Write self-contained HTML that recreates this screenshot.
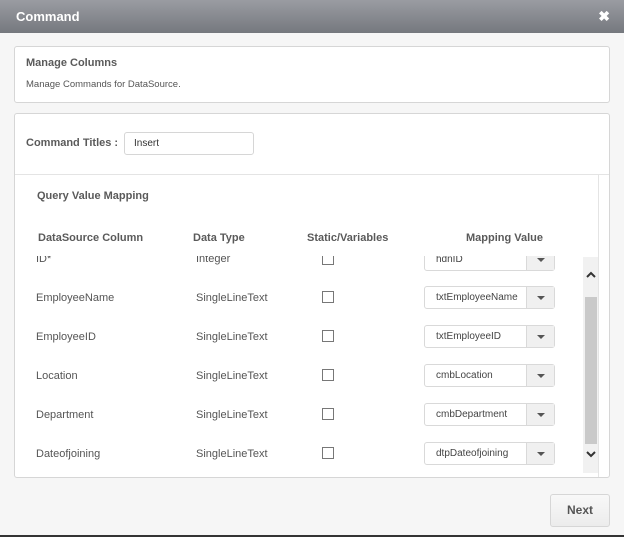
<!DOCTYPE html>
<html><head><meta charset="utf-8"><style>
*{box-sizing:border-box;margin:0;padding:0}
body{width:624px;height:537px;overflow:hidden;background:#f6f6f6;font-family:"Liberation Sans",Arial,sans-serif;position:relative;color:#555}
.hdr{position:absolute;left:0;top:0;width:624px;height:33px;background:linear-gradient(#9a9ca2,#75787e);color:#fff;font-weight:bold;font-size:13px;line-height:33px;padding-left:16px}
.x{position:absolute;right:14px;top:0;font-size:14px}
.card{position:absolute;left:14px;width:596px;background:#fff;border:1px solid #d6d6d6;border-radius:3px}
.a{position:absolute;font-size:11px;white-space:nowrap}
.b{font-weight:bold;color:#5a5a5a}
.sel{position:absolute;left:424px;width:131px;height:23px;border:1px solid #d9d9d9;border-radius:3px;background:#fff;font-size:10px;line-height:21px;padding-left:11px;color:#444}
.sel i{position:absolute;right:0;top:0;width:28px;height:21px;background:#f0f0f0;border-left:1px solid #d9d9d9}
.sel i:after{content:"";position:absolute;left:10px;top:9px;border:4px solid transparent;border-top:4px solid #555;border-bottom:0}
.cb{position:absolute;left:322px;width:12px;height:12px;border:1px solid #777;background:#fff}
</style></head><body>
<div class="hdr">Command<span class="x">✖</span></div>
<div class="card" style="top:46px;height:57px"></div>
<div class="a b" style="left:26px;top:57px;font-size:11px">Manage Columns</div>
<div class="a" style="left:26px;top:79px;font-size:9.5px">Manage Commands for DataSource.</div>
<div class="card" style="top:113px;height:365px"></div>
<div class="a b" style="left:26px;top:137px">Command Titles :</div>
<div style="position:absolute;left:124px;top:132px;width:130px;height:23px;border:1px solid #d6d6d6;border-radius:3px;background:#fff;font-size:10px;line-height:21px;padding-left:9px;color:#333">Insert</div>
<div style="position:absolute;left:15px;top:174px;width:594px;height:1px;background:#e4e4e4"></div>
<div style="position:absolute;left:598px;top:174px;width:1px;height:303px;background:#e4e4e4"></div>
<div class="a b" style="left:37px;top:190px">Query Value Mapping</div>
<div class="a b" style="left:38px;top:232px">DataSource Column</div>
<div class="a b" style="left:193px;top:232px">Data Type</div>
<div class="a b" style="left:307px;top:232px">Static/Variables</div>
<div class="a b" style="left:466px;top:232px">Mapping Value</div>
<div style="position:absolute;left:15px;top:256px;width:583px;height:216px;overflow:hidden">
 <div style="position:absolute;left:-15px;top:-256px;width:624px;height:537px">
  <div class="a" style="left:36px;top:253px">ID*</div><div class="a" style="left:196px;top:253px">Integer</div><div class="cb" style="top:253px"></div><div class="sel" style="top:248px">hdnID<i></i></div>
  <div class="a" style="left:36px;top:292px">EmployeeName</div><div class="a" style="left:196px;top:292px">SingleLineText</div><div class="cb" style="top:291px"></div><div class="sel" style="top:286px">txtEmployeeName<i></i></div>
  <div class="a" style="left:36px;top:331px">EmployeeID</div><div class="a" style="left:196px;top:331px">SingleLineText</div><div class="cb" style="top:330px"></div><div class="sel" style="top:325px">txtEmployeeID<i></i></div>
  <div class="a" style="left:36px;top:370px">Location</div><div class="a" style="left:196px;top:370px">SingleLineText</div><div class="cb" style="top:369px"></div><div class="sel" style="top:364px">cmbLocation<i></i></div>
  <div class="a" style="left:36px;top:409px">Department</div><div class="a" style="left:196px;top:409px">SingleLineText</div><div class="cb" style="top:408px"></div><div class="sel" style="top:403px">cmbDepartment<i></i></div>
  <div class="a" style="left:36px;top:448px">Dateofjoining</div><div class="a" style="left:196px;top:448px">SingleLineText</div><div class="cb" style="top:447px"></div><div class="sel" style="top:442px">dtpDateofjoining<i></i></div>
 </div>
</div>
<div style="position:absolute;left:583px;top:257px;width:15px;height:216px;background:#f1f1f1"></div>
<div style="position:absolute;left:585px;top:297px;width:12px;height:147px;background:#c9c9c9"></div>
<svg style="position:absolute;left:585px;top:270px" width="12" height="10"><path d="M2 7 L6 3 L10 7" stroke="#333" stroke-width="2" fill="none"/></svg>
<svg style="position:absolute;left:585px;top:449px" width="12" height="10"><path d="M2 3 L6 7 L10 3" stroke="#333" stroke-width="2" fill="none"/></svg>
<div style="position:absolute;left:550px;top:494px;width:60px;height:33px;border:1px solid #d6d6d6;border-radius:3px;background:linear-gradient(#f8f8f8,#ececec);font-weight:bold;font-size:12px;line-height:31px;text-align:center;color:#555">Next</div>
<div style="position:absolute;left:0;top:535px;width:624px;height:2px;background:#333"></div>
</body></html>
